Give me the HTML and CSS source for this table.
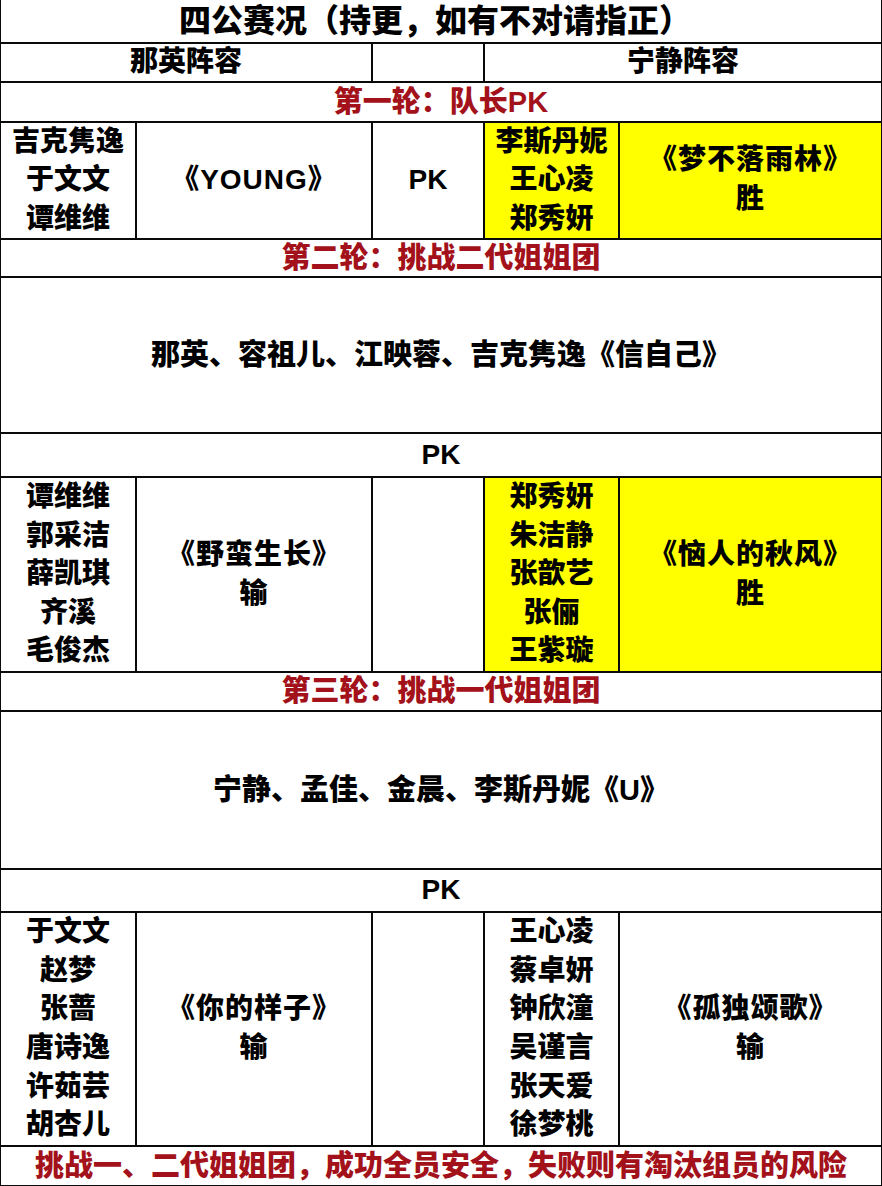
FILE: index.html
```html
<!DOCTYPE html>
<html lang="zh-CN">
<head>
<meta charset="utf-8">
<title>四公赛况</title>
<link rel="stylesheet" href="styles.css">
</head>
<body>
<div class="board">
  <div class="cell span-all title">四公赛况（持更，如有不对请指正）</div>

  <div class="cell span-left">那英阵容</div>
  <div class="cell"></div>
  <div class="cell span-right">宁静阵容</div>

  <div class="cell span-all wide red">第一轮：队长PK</div>

  <div class="cell lines">吉克隽逸<br>于文文<br>谭维维</div>
  <div class="cell lines song">《YOUNG》</div>
  <div class="cell">PK</div>
  <div class="cell lines win">李斯丹妮<br>王心凌<br>郑秀妍</div>
  <div class="cell lines win song song-up">《梦不落雨林》<br>胜</div>

  <div class="cell span-all wide red">第二轮：挑战二代姐姐团</div>
  <div class="cell span-all wide">那英、容祖儿、江映蓉、吉克隽逸《信自己》</div>
  <div class="cell span-all">PK</div>

  <div class="cell lines">谭维维<br>郭采洁<br>薛凯琪<br>齐溪<br>毛俊杰</div>
  <div class="cell lines song">《野蛮生长》<br>输</div>
  <div class="cell"></div>
  <div class="cell lines win">郑秀妍<br>朱洁静<br>张歆艺<br>张俪<br>王紫璇</div>
  <div class="cell lines win song">《恼人的秋风》<br>胜</div>

  <div class="cell span-all wide red">第三轮：挑战一代姐姐团</div>
  <div class="cell span-all wide">宁静、孟佳、金晨、李斯丹妮《U》</div>
  <div class="cell span-all">PK</div>

  <div class="cell lines">于文文<br>赵梦<br>张蔷<br>唐诗逸<br>许茹芸<br>胡杏儿</div>
  <div class="cell lines song">《你的样子》<br>输</div>
  <div class="cell"></div>
  <div class="cell lines">王心凌<br>蔡卓妍<br>钟欣潼<br>吴谨言<br>张天爱<br>徐梦桃</div>
  <div class="cell lines song">《孤独颂歌》<br>输</div>

  <div class="cell span-all wide red">挑战一、二代姐姐团，成功全员安全，失败则有淘汰组员的风险</div>
</div>
</body>
</html>
```

FILE: styles.css
```css
html, body {
  margin: 0;
  padding: 0;
  background: #ffffff;
}

body {
  width: 882px;
  height: 1186px;
  overflow: hidden;
  font-family: "Liberation Sans", "Noto Sans CJK SC", sans-serif;
  font-weight: 900;
  font-size: 28px;
  color: #000000;
}

.board {
  display: grid;
  grid-template-columns: 134px 234px 110px 133px 261px;
  grid-template-rows: 42px 37px 38px 115px 36px 154px 42px 193px 37px 156px 41px 232px 38px;
  gap: 2px;
  padding: 0 1px 1px 1px;
  background: #0a0a0a;
  width: 882px;
  height: 1186px;
  box-sizing: border-box;
}

.cell {
  background: #ffffff;
  display: flex;
  align-items: center;
  justify-content: center;
  text-align: center;
  line-height: 38.6px;
  white-space: nowrap;
}

.span-all {
  grid-column: 1 / -1;
}

.span-left {
  grid-column: 1 / 3;
}

.span-right {
  grid-column: 4 / 6;
}

.title {
  font-size: 32px;
  padding-right: 12px;
}

.wide {
  font-size: 29px;
}

.song {
  letter-spacing: 1px;
}

.red {
  color: #a3121a;
}

.win {
  background: #ffff00;
}

.song-up {
  padding-bottom: 2px;
}
```
